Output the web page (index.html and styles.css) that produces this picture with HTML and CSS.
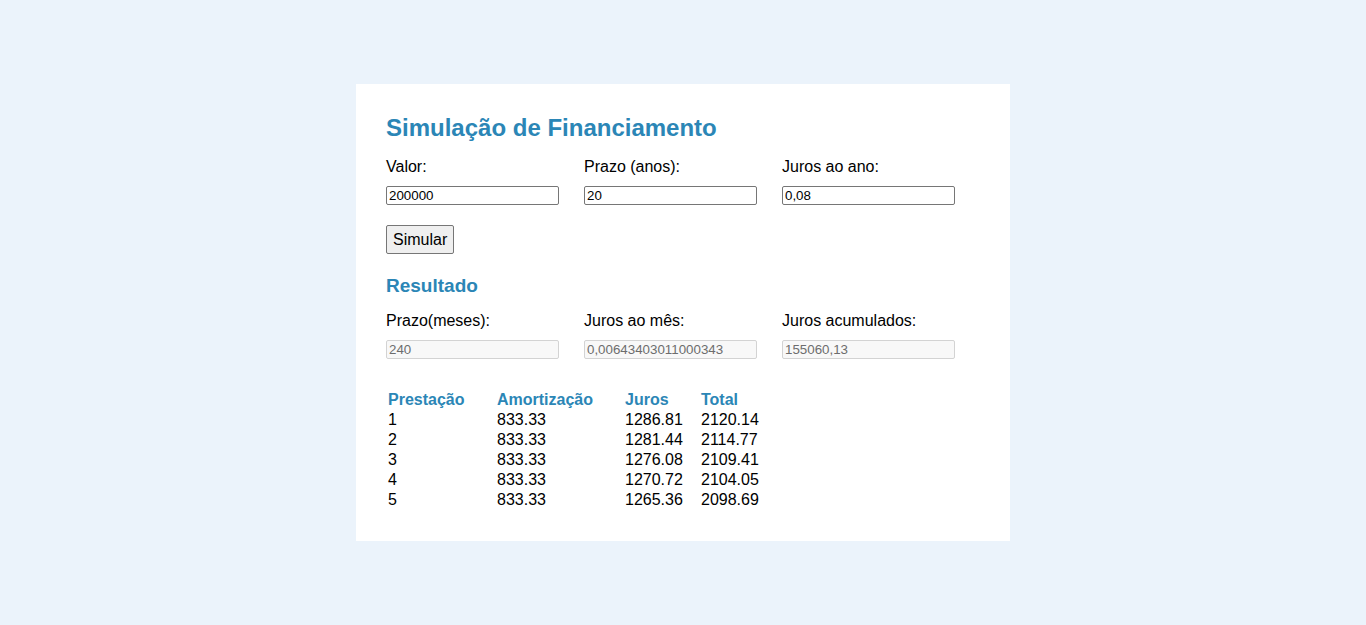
FILE: index.html
```html
<!DOCTYPE html>
<html lang="pt">
<head>
<meta charset="utf-8">
<title>Simulação de Financiamento</title>
<link rel="stylesheet" href="styles.css">
</head>
<body>
<main class="card">
  <h1 class="title">Simulação de Financiamento</h1>
  <div class="fields">
    <label class="field"><span class="label">Valor:</span><input class="input" type="text" value="200000"></label>
    <label class="field"><span class="label">Prazo (anos):</span><input class="input" type="text" value="20"></label>
    <label class="field"><span class="label">Juros ao ano:</span><input class="input" type="text" value="0,08"></label>
  </div>
  <button class="btn" type="button">Simular</button>
  <h2 class="subtitle">Resultado</h2>
  <div class="fields">
    <label class="field"><span class="label">Prazo(meses):</span><input class="input" type="text" value="240" disabled></label>
    <label class="field"><span class="label">Juros ao mês:</span><input class="input" type="text" value="0,00643403011000343" disabled></label>
    <label class="field"><span class="label">Juros acumulados:</span><input class="input" type="text" value="155060,13" disabled></label>
  </div>
  <table class="table">
    <thead>
      <tr><th class="c1">Prestação</th><th class="c2">Amortização</th><th class="c3">Juros</th><th>Total</th></tr>
    </thead>
    <tbody>
      <tr><td>1</td><td>833.33</td><td>1286.81</td><td>2120.14</td></tr>
      <tr><td>2</td><td>833.33</td><td>1281.44</td><td>2114.77</td></tr>
      <tr><td>3</td><td>833.33</td><td>1276.08</td><td>2109.41</td></tr>
      <tr><td>4</td><td>833.33</td><td>1270.72</td><td>2104.05</td></tr>
      <tr><td>5</td><td>833.33</td><td>1265.36</td><td>2098.69</td></tr>
    </tbody>
  </table>
</main>
</body>
</html>
```
FILE: styles.css
```css
html, body {
  margin: 0;
  padding: 0;
}
body {
  background: #ebf3fb;
  font-family: "Liberation Sans", Arial, sans-serif;
  color: #000;
  font-size: 16px;
}
.card {
  box-sizing: border-box;
  width: 654px;
  margin: 84px auto 0;
  background: #fff;
  padding: 30px 30px 30px;
}
.title {
  margin: 0 0 16px;
  font-size: 24px;
  line-height: 28px;
  font-weight: bold;
  color: #2b86b6;
}
.fields {
  display: flex;
  gap: 25px;
}
.field {
  display: flex;
  flex-direction: column;
  width: 173px;
}
.label {
  font-size: 16px;
  line-height: 18px;
  height: 18px;
  margin-bottom: 10px;
}
.input {
  box-sizing: border-box;
  width: 173px;
  height: 19px;
  margin: 0;
  padding: 1px 2px;
  border: 1px solid #767676;
  border-radius: 2px;
  font-family: "Liberation Sans", Arial, sans-serif;
  font-size: 13.33px;
  color: #000;
  background: #fff;
}
.input:disabled {
  background: #f8f8f8;
  border-color: #d3d3d3;
  color: #6d6d6d;
}
.btn {
  display: block;
  box-sizing: border-box;
  margin: 20px 0 0;
  height: 29px;
  padding: 4px 6px;
  border: 1px solid #767676;
  border-radius: 2px;
  background: #efefef;
  font-family: "Liberation Sans", Arial, sans-serif;
  font-size: 16px;
  color: #000;
}
.subtitle {
  margin: 21px 0 16px;
  font-size: 19px;
  line-height: 21px;
  font-weight: bold;
  color: #2b86b6;
}
.table {
  margin-top: 30px;
  border-spacing: 2px;
  border-collapse: separate;
}
.table th, .table td {
  padding: 0;
  text-align: left;
  font-size: 16px;
  line-height: 18px;
}
.table th {
  color: #2b86b6;
  font-weight: bold;
}
.c1 { width: 107px; }
.c2 { width: 126px; }
.c3 { width: 74px; }
```
